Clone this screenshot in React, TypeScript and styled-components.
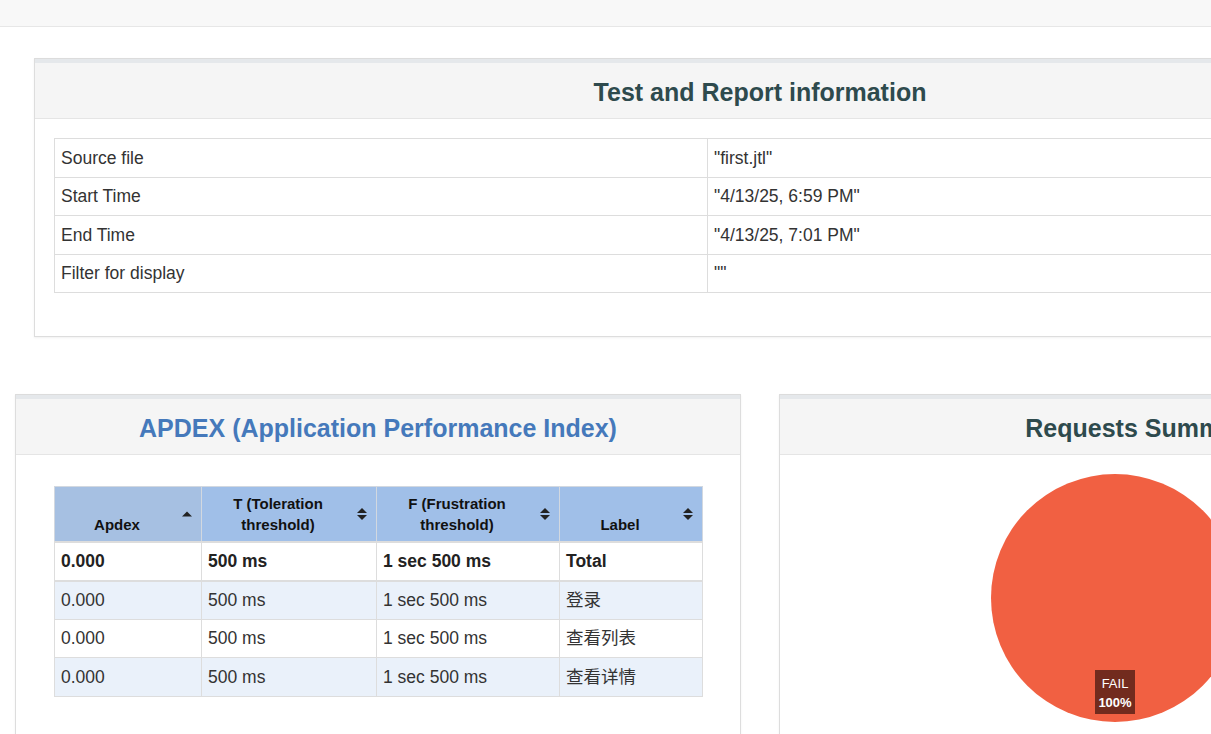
import React from 'react';
import styled, { createGlobalStyle } from 'styled-components';

const GlobalStyle = createGlobalStyle`
	html, body {
		margin: 0;
		padding: 0;
		background: #fff;
		overflow-x: hidden;
	}
	body {
		font-family: 'Liberation Sans', Arial, 'Noto Sans CJK SC', sans-serif;
		font-size: 16px;
		color: #333;
	}
	* {
		box-sizing: border-box;
	}
`;

const infoRows = [
	['Source file', '"first.jtl"'],
	['Start Time', '"4/13/25, 6:59 PM"'],
	['End Time', '"4/13/25, 7:01 PM"'],
	['Filter for display', '""'],
];

const apdexRows = [
	['0.000', '500 ms', '1 sec 500 ms', '登录'],
	['0.000', '500 ms', '1 sec 500 ms', '查看列表'],
	['0.000', '500 ms', '1 sec 500 ms', '查看详情'],
];

const apdexHeads: { label: React.ReactNode; width: number; sort: 'asc' | 'both' }[] = [
	{ label: 'Apdex', width: 147, sort: 'asc' },
	{ label: <>T (Toleration<br />threshold)</>, width: 175, sort: 'both' },
	{ label: <>F (Frustration<br />threshold)</>, width: 183, sort: 'both' },
	{ label: 'Label', width: 143, sort: 'both' },
];

const App: React.FC = () => {
	return (
		<Page>
			<GlobalStyle />
			<NavBar />
			<Content>
				<Panel $width={1452} $left={34}>
					<PanelHeading>
						<PanelTitle>Test and Report information</PanelTitle>
					</PanelHeading>
					<PanelBody>
						<InfoTable>
							<tbody>
								{infoRows.map(([k, v]) => (
									<tr key={k}>
										<InfoCell $width={653}>{k}</InfoCell>
										<InfoCell>{v}</InfoCell>
									</tr>
								))}
							</tbody>
						</InfoTable>
					</PanelBody>
				</Panel>

				<PanelRow>
					<Panel $width={726}>
						<PanelHeading>
							<PanelTitle $blue>APDEX (Application Performance Index)</PanelTitle>
						</PanelHeading>
						<ApdexBody>
							<ApdexTable>
								<thead>
									<tr>
										{apdexHeads.map((h, i) => (
											<HeadCell key={i} $width={h.width} $sorted={h.sort === 'asc'}>
												{h.label}
												<SortIcon>
													<Up />
													{h.sort === 'both' && <Down />}
												</SortIcon>
											</HeadCell>
										))}
									</tr>
								</thead>
								<tbody>
									<TotalRow>
										<DataCell>0.000</DataCell>
										<DataCell>500 ms</DataCell>
										<DataCell>1 sec 500 ms</DataCell>
										<DataCell>Total</DataCell>
									</TotalRow>
									{apdexRows.map((r, i) => (
										<DataRow key={i} $odd={i % 2 === 0}>
											{r.map((c, j) => (
												<DataCell key={j}>{c}</DataCell>
											))}
										</DataRow>
									))}
								</tbody>
							</ApdexTable>
						</ApdexBody>
					</Panel>

					<Panel $width={726}>
						<PanelHeading>
							<PanelTitle>Requests Summary</PanelTitle>
						</PanelHeading>
						<ChartBody>
							<svg width="724" height="300" viewBox="0 0 724 300">
								<circle cx="335" cy="143" r="124" fill="#f16042" />
								<rect x="315" y="215" width="40" height="44" fill="#722b1e" />
								<text x="335" y="233" textAnchor="middle" fill="#fff" fontSize="13" fontFamily="'Liberation Sans', Arial, sans-serif">
									FAIL
								</text>
								<text x="335" y="252" textAnchor="middle" fill="#fff" fontSize="13" fontWeight="bold" fontFamily="'Liberation Sans', Arial, sans-serif">
									100%
								</text>
							</svg>
						</ChartBody>
					</Panel>
				</PanelRow>
			</Content>
		</Page>
	);
};

export default App;

const Page = styled.div`
	width: 1211px;
	height: 734px;
	overflow: hidden;
`;

const NavBar = styled.div`
	height: 27px;
	background: #f8f8f8;
	border-bottom: 1px solid #e7e7e7;
`;

const Content = styled.div`
	width: 1600px;
	padding-top: 31px;
`;

const Panel = styled.div<{ $width: number; $left?: number }>`
	width: ${p => p.$width}px;
	margin-left: ${p => p.$left ?? 0}px;
	background: #fff;
	border: 1px solid #ddd;
	border-top-color: #dcdcdc;
	box-shadow: 0 1px 2px rgba(0, 0, 0, 0.06);
	flex-shrink: 0;
`;

const PanelRow = styled.div`
	display: flex;
	gap: 38px;
	margin-top: 57px;
	padding-left: 15px;
`;

const PanelHeading = styled.div`
	height: 60px;
	padding-top: 3px;
	border-top: 4px solid #e5e8eb;
	background: #f5f5f5;
	border-bottom: 1px solid #e5e5e5;
	display: flex;
	align-items: center;
	justify-content: center;
`;

const PanelTitle = styled.h2<{ $blue?: boolean }>`
	margin: 0;
	font-size: 25px;
	font-weight: bold;
	color: ${p => (p.$blue ? '#4579bb' : '#2e4a4d')};
`;

const PanelBody = styled.div`
	padding: 19px 19px 43px;
`;

const InfoTable = styled.table`
	width: 1412px;
	border-collapse: collapse;
	border: 1px solid #ddd;
`;

const InfoCell = styled.td<{ $width?: number }>`
	${p => (p.$width ? `width: ${p.$width}px;` : '')}
	height: 38.5px;
	padding: 0 6px;
	border: 1px solid #ddd;
	font-size: 17.5px;
	line-height: 20px;
	vertical-align: middle;
`;

const ApdexBody = styled.div`
	padding: 31px 38px 40px;
`;

const ApdexTable = styled.table`
	width: 648px;
	border-collapse: collapse;
	table-layout: fixed;
	border: 1px solid #ddd;
`;

const HeadCell = styled.th<{ $width: number; $sorted: boolean }>`
	position: relative;
	width: ${p => p.$width}px;
	height: 55px;
	padding: 6px 30px 6px 8px;
	background: ${p => (p.$sorted ? '#a6c0e2' : '#a0bfe8')};
	border: 1px solid #d2d8e0;
	border-bottom: 2px solid #ddd;
	color: #111;
	font-size: 15px;
	font-weight: bold;
	line-height: 21px;
	text-align: center;
	vertical-align: bottom;
	white-space: nowrap;
`;

const SortIcon = styled.span`
	position: absolute;
	right: 9px;
	top: 50%;
	transform: translateY(-50%);
	display: flex;
	flex-direction: column;
	align-items: center;
	gap: 2px;
`;

const Up = styled.span`
	width: 0;
	height: 0;
	border-left: 5px solid transparent;
	border-right: 5px solid transparent;
	border-bottom: 5px solid #222;
`;

const Down = styled.span`
	width: 0;
	height: 0;
	border-left: 5px solid transparent;
	border-right: 5px solid transparent;
	border-top: 5px solid #222;
`;

const TotalRow = styled.tr`
	background: #fff;
	font-weight: bold;
	td {
		border-bottom: 2px solid #ddd;
		color: #222;
	}
`;

const DataRow = styled.tr<{ $odd: boolean }>`
	background: ${p => (p.$odd ? '#eaf1fa' : '#fff')};
`;

const DataCell = styled.td`
	height: 38.5px;
	padding: 0 6px;
	border: 1px solid #ddd;
	font-size: 17.5px;
	line-height: 20px;
	vertical-align: middle;
	white-space: nowrap;
`;

const ChartBody = styled.div`
	height: 300px;
`;
